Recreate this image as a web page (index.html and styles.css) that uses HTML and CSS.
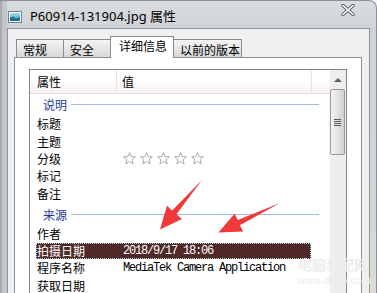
FILE: index.html
```html
<!DOCTYPE html>
<html lang="zh-CN">
<head>
    <meta charset="UTF-8">
    <title>P60914-131904.jpg 属性</title>
    <link rel="stylesheet" href="styles.css">
</head>
<body>
<div class="window">
    <div class="titlebar">
        <svg class="app-icon" width="14" height="12" viewBox="0 0 14 12">
            <defs>
                <linearGradient id="sky" x1="0" y1="0" x2="0" y2="1">
                    <stop offset="0" stop-color="#9fdcf4"/>
                    <stop offset="1" stop-color="#3e9cc4"/>
                </linearGradient>
            </defs>
            <rect x="0.5" y="0.5" width="13" height="11" fill="#fff" stroke="#6f7f8c"/>
            <rect x="2" y="2" width="10" height="8" fill="url(#sky)"/>
            <path d="M2 10 L2 7 L5 5.5 L8 7.5 L12 6 L12 10 Z" fill="#1f6f8f"/>
        </svg>
        <span class="title">P60914-131904.jpg 属性</span>
        <svg class="close" width="14" height="12" viewBox="0 0 14 12">
            <path d="M2 1.5 L12 10.5 M12 1.5 L2 10.5" stroke="#5c6168" stroke-width="3.4" stroke-linecap="round"/>
            <path d="M2 1.5 L12 10.5 M12 1.5 L2 10.5" stroke="#fff" stroke-width="1.6" stroke-linecap="round"/>
        </svg>
    </div>

    <div class="client">
        <div class="tabs">
            <div class="tab tab-general">常规</div>
            <div class="tab tab-security">安全</div>
            <div class="tab tab-details active">详细信息</div>
            <div class="tab tab-previous">以前的版本</div>
        </div>

        <div class="panel">
            <div class="list">
                <div class="list-body">
                    <div class="header">
                        <div class="col-name">属性</div>
                        <div class="col-value">值</div>
                        <div class="col-rest"></div>
                    </div>

                    <div class="group group-first"><span>说明</span><i class="rule"></i></div>
                    <div class="row"><span class="name">标题</span></div>
                    <div class="row"><span class="name">主题</span></div>
                    <div class="row">
                        <span class="name">分级</span>
                        <svg class="stars" width="82" height="13" viewBox="0 0 82 13">
                            <defs>
                                <polygon id="star" points="6.5,0.6 8.05,4.6 12.4,4.85 9.05,7.6 10.15,11.9 6.5,9.5 2.85,11.9 3.95,7.6 0.6,4.85 4.95,4.6"/>
                            </defs>
                            <use href="#star" x="0"/>
                            <use href="#star" x="17"/>
                            <use href="#star" x="34"/>
                            <use href="#star" x="51"/>
                            <use href="#star" x="68"/>
                        </svg>
                    </div>
                    <div class="row"><span class="name">标记</span></div>
                    <div class="row"><span class="name">备注</span></div>

                    <div class="group group-second"><span>来源</span><i class="rule"></i></div>
                    <div class="row"><span class="name">作者</span></div>
                    <div class="row selected"><span class="name">拍摄日期</span><span class="value">2018/9/17 18:06</span></div>
                    <div class="row"><span class="name">程序名称</span><span class="value">MediaTek Camera Application</span></div>
                    <div class="row"><span class="name">获取日期</span></div>
                </div>

                <div class="scrollbar">
                    <div class="scroll-up"><i class="arrow-up"></i></div>
                    <div class="thumb"><i class="grip"></i></div>
                </div>
            </div>
        </div>
    </div>

    <div class="watermark">
        <div class="wm-big">电脑装配网</div>
        <div class="wm-small">www.dnzp.com</div>
    </div>

    <svg class="arrows" width="377" height="293" viewBox="0 0 377 293">
        <polygon points="202,180 176.5,214.2 182,219 160,229.5 167,205.8 172.2,210.4" fill="#f03a3a"/>
        <polygon points="280,203 239.9,225.2 243.2,231.6 218.5,232.5 234.6,213.8 237.8,220" fill="#f03a3a"/>
    </svg>
</div>
</body>
</html>
```

FILE: styles.css
```css
* {
    box-sizing: border-box;
}
body {
    margin: 0;
    background: #f4f4f4;
    font-family: "Noto Sans CJK SC", sans-serif;
    font-size: 12px;
    color: #000;
}
.window {
    position: relative;
    width: 377px;
    height: 293px;
    overflow: hidden;
    background:
        linear-gradient(to right, #a7abaf 0 2px, #c3c6c9 2px 7px, transparent 7px),
        linear-gradient(#dadde0, #cfd3d6 28px, #d4d6d6 200px, #dedcd4);
    border-top: 1px solid #8c9198;
    border-right: 1px solid #8c9198;
    border-top-right-radius: 8px;
}
.titlebar {
    height: 27px;
    display: flex;
    align-items: center;
    padding-left: 8px;
}
.app-icon {
    margin-top: 5px;
}
.title {
    margin-left: 8px;
    margin-top: 2px;
    font-family: "Noto Sans", "Noto Sans CJK SC", sans-serif;
    font-size: 13px;
    color: #000;
}
.close {
    margin-left: auto;
    margin-right: 21px;
    align-self: flex-start;
    margin-top: 3px;
}

.client {
    margin: 0 6px 0 7px;
    height: 300px;
    border: 1px solid #8e949b;
    border-bottom: none;
    background: #f0f0f0;
}
.tabs {
    height: 28px;
    display: flex;
    align-items: flex-end;
    padding-left: 8px;
}
.tab {
    position: relative;
    height: 18px;
    margin-right: -1px;
    padding: 2px 0 0 6px;
    line-height: 16px;
    border: 1px solid #898c95;
    border-bottom: none;
    background: linear-gradient(#f4f4f4, #e6e6e6 50%, #d9d9d9);
    white-space: nowrap;
}
.tab-general { width: 48px; }
.tab-security { width: 48px; }
.tab-details { width: 64px; }
.tab-previous { width: 69px; }
.tab.active {
    z-index: 2;
    height: 22px;
    margin-bottom: -1px;
    padding: 1px 0 0 8px;
    background: #fff;
}

.panel {
    margin: 0 7px 0 6px;
    height: 260px;
    border: 1px solid #898c95;
    background: #fff;
}
.list {
    margin: 11px 14px 0;
    height: 260px;
    border: 1px solid #828790;
    display: flex;
}
.list-body {
    flex: 1;
}
.header {
    display: flex;
    height: 24px;
    line-height: 23px;
    border-bottom: 1px solid #eadede;
    background: linear-gradient(#fff, #fff 45%, #f8f0f0);
}
.col-name {
    width: 87px;
    padding-left: 7px;
    border-right: 1px solid #e6e2e2;
}
.col-value {
    width: 195px;
    padding-left: 5px;
    border-right: 1px solid #e6e2e2;
}
.col-rest {
    flex: 1;
}

.group {
    display: flex;
    align-items: center;
    width: 283px;
    margin-left: 6px;
    padding-left: 7px;
    color: #1e3a9c;
}
.group-first {
    height: 21.33px;
    padding-bottom: 1px;
}
.group-second {
    height: 22.67px;
    padding-top: 2px;
}
.group .rule {
    flex: 1;
    height: 1px;
    margin-left: 4px;
    background: #a9bbe4;
}
.row {
    display: flex;
    align-items: center;
    width: 275px;
    height: 17.33px;
    margin-left: 6px;
    padding-left: 1px;
}
.row .name {
    width: 86px;
    flex-shrink: 0;
}
.row .value {
    font-family: "Liberation Mono", monospace;
    font-size: 12px;
    letter-spacing: -1.2px;
}
.row.selected {
    height: 16px;
    margin: 0.67px 0 0.67px 6px;
    background: #512828;
    color: #fff;
    outline: 1px dotted #9fe0e0;
    outline-offset: -1px;
}
.stars {
    fill: #fff;
    stroke: #aaa;
    stroke-width: 1;
}

.scrollbar {
    width: 17px;
    background: #eeeeee;
    border-left: 1px solid #f6f6f6;
}
.scroll-up {
    height: 19px;
    display: flex;
    align-items: center;
    justify-content: center;
}
.arrow-up {
    width: 0;
    height: 0;
    border-left: 4px solid transparent;
    border-right: 4px solid transparent;
    border-bottom: 4px solid #5e5e5e;
}
.thumb {
    height: 66px;
    margin: 0 1px 0 0;
    border: 1px solid #979797;
    border-radius: 2px;
    background: linear-gradient(to right, #f4f4f4, #e4e4e4 50%, #cfcfcf);
    display: flex;
    align-items: center;
    justify-content: center;
}
.grip {
    width: 7px;
    height: 7px;
    background: repeating-linear-gradient(#5a5a5a 0 1px, transparent 1px 2px);
}

.watermark {
    position: absolute;
    left: 297px;
    top: 255px;
    width: 72px;
    text-align: center;
    color: #ededed;
    pointer-events: none;
}
.wm-big {
    font-size: 14px;
    font-weight: bold;
    line-height: 16px;
}
.wm-small {
    font-family: "Liberation Sans", sans-serif;
    font-size: 11px;
    line-height: 16px;
}
.arrows {
    position: absolute;
    left: 0;
    top: -1px;
    pointer-events: none;
}
```
